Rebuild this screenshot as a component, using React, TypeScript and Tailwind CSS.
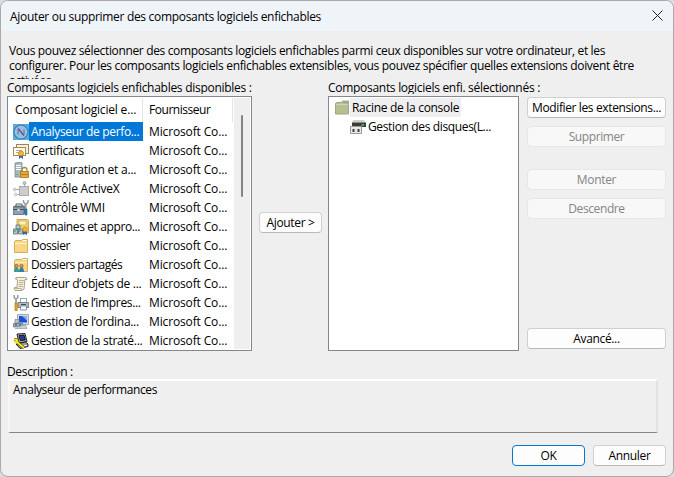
import type { ReactNode } from 'react';
import clsx from 'clsx';

function Icon({ children }: { children: ReactNode }) {
  return (
    <svg viewBox="0 0 16 16" className="h-4 w-4 shrink-0">
      {children}
    </svg>
  );
}

const PerfIcon = () => (
  <Icon>
    <rect width="16" height="16" fill="#5ba9dc" />
    <circle cx="8" cy="8" r="7.2" fill="#4f9dd0" stroke="#3a7cae" strokeWidth=".8" />
    <circle cx="8" cy="8" r="5.6" fill="#8fbfe2" stroke="#a9d0ea" strokeWidth=".8" />
    <path d="M5 10.500V5.500M11 10.500V5.500" fill="none" stroke="#4676ae" strokeWidth="1" />
    <path d="M5 4.500l6 7" stroke="#8b3a72" strokeWidth="1.200" />
  </Icon>
);
const CertIcon = () => (
  <Icon>
    <rect x="3.500" y="1.500" width="12" height="9" fill="#f7f1dc" stroke="#9c8360" />
    <rect x=".5" y="4.500" width="12" height="8" fill="#fffdf2" stroke="#a38a60" />
    <path d="M3 7.500h6M3 9.500h3" stroke="#b5aa92" />
    <path d="M6 11v5l2-1.500 2 1.500v-5z" fill="#2467c2" />
    <circle cx="8" cy="10.500" r="2.500" fill="#f5b52b" stroke="#c07b10" strokeWidth=".7" />
  </Icon>
);
const ServerLockIcon = () => (
  <Icon>
    <path d="M2 1l6-1 1 1v14H2z" fill="#a9b8be" stroke="#7b888e" strokeWidth=".8" />
    <path d="M3 3.500h5M3 5.500h5M3 7.500h5" stroke="#fff" />
    <path d="M3 12.500h2" stroke="#5fb45a" />
    <path d="M9 10V8q0-2.500 2.500-2.500T14 8v2" fill="none" stroke="#9b8b5c" strokeWidth="1.300" />
    <rect x="7.500" y="9.500" width="8" height="6" fill="#e4aa32" stroke="#a67924" strokeWidth=".8" />
    <path d="M8 12.500h7" stroke="#b47f1d" />
  </Icon>
);
const ActiveXIcon = () => (
  <Icon>
    <path d="M11.500 2v4M0 8.500h6M3 13.500h4" stroke="#a5a5a5" />
    <rect x="6.500" y="5.500" width="9" height="9" fill="#cdcdcd" stroke="#ababab" />
    <circle cx="11.500" cy="2" r="1.600" fill="#c4c4c4" stroke="#999" strokeWidth=".6" />
    <circle cx="1.700" cy="8.500" r="1.400" fill="#ddd" stroke="#aaa" strokeWidth=".6" />
    <circle cx="2.700" cy="13.500" r="1.500" fill="#e2e2e2" stroke="#b5b5b5" strokeWidth=".6" />
  </Icon>
);
const ToolboxIcon = () => (
  <Icon>
    <path d="M3 6V4h6v2" fill="none" stroke="#555e66" />
    <path d="M0 7l2-1.500h11V14H0z" fill="#6a7a88" />
    <path d="M0 7h11v7.500H0z" fill="#8fa0ae" stroke="#586672" strokeWidth=".8" />
    <path d="M0 9.500h11" stroke="#45525e" />
    <path d="M4.500 9h2v2h-2z" fill="#e5e9ec" />
    <path d="M10.500 0v2l1.500 2h1.500L15 2V0" fill="none" stroke="#979797" strokeWidth="1.400" />
    <path d="M12.800 4v5" stroke="#a5a5a5" strokeWidth="1.800" />
    <path d="M12 9h2v6h-2z" fill="#3182c9" stroke="#205b91" strokeWidth=".6" />
  </Icon>
);
const DomainIcon = () => (
  <Icon>
    <path d="M4 .5h10.500l1 1V14H4z" fill="#ecd173" stroke="#bb9a42" strokeWidth=".8" />
    <rect x="6" y="2" width="7" height="4" fill="#fff3bd" stroke="#c9a952" strokeWidth=".6" />
    <path d="M3 6h4v4H3zM.5 10h4v5h-4zM5.500 10h4v5h-4z" fill="#b4c8cd" stroke="#5b747c" strokeWidth=".8" />
    <path d="M1 12h2M6 12h2" stroke="#3c9b4b" />
    <path d="M10 11v5l2-1 2 1v-5z" fill="#2467c2" />
    <circle cx="12" cy="10.500" r="2.400" fill="#f5b52b" stroke="#c07b10" strokeWidth=".6" />
  </Icon>
);
const FolderShape = () => (
  <>
    <path d="M1.500 3.500l1-1h6l1-1h5v13h-13z" fill="#f7d785" stroke="#cfa854" strokeWidth=".9" />
    <path d="M10 2.500h3.500" stroke="#fff" />
    <path d="M2 5.500h12" stroke="#fff0bd" strokeWidth="1.200" />
  </>
);
const FolderIcon = () => (
  <Icon>
    <FolderShape />
  </Icon>
);
const SharedIcon = () => (
  <Icon>
    <FolderShape />
    <path d="M1 15q0-4.500 2.500-4.500T6 15z" fill="#36a08b" />
    <path d="M6 15q0-4.500 2.500-4.500T11 15z" fill="#2f7fb5" />
    <circle cx="3.500" cy="9" r="1.600" fill="#e3a06b" stroke="#6d4425" strokeWidth=".7" />
    <circle cx="8.500" cy="9" r="1.600" fill="#e3a06b" stroke="#6d4425" strokeWidth=".7" />
  </Icon>
);
const ScrollIcon = () => (
  <Icon>
    <path d="M3 1.500h9.500q1.500 0 1.500 2h-2l-1 9.500q-1 1.500-3 1.500H2q-1.500-1-.5-3H4L4.500 4Q1.500 3.500 3 1.500z" fill="#f5efd9" stroke="#a0977f" strokeWidth=".9" />
    <path d="M6 4.500h5M6 6.500h4.500M5.500 8.500H10M5.500 10.500H10" stroke="#aaa18b" strokeWidth=".8" />
    <path d="M1.500 12.500h7v2" fill="none" stroke="#b5ac94" strokeWidth=".9" />
  </Icon>
);
const PrinterIcon = () => (
  <Icon>
    <rect x="7.500" y="3.500" width="6" height="5" fill="#fff" stroke="#8292a0" strokeWidth=".8" />
    <path d="M5 7.500h10.500v5H5z" fill="#b2bbc2" stroke="#65707a" strokeWidth=".8" />
    <path d="M7.500 11h6v4h-6z" fill="#f5f8fb" stroke="#75828d" strokeWidth=".8" />
    <path d="M8 9.500h5" stroke="#41484e" />
    <path d="M1.200 0v2.500l1.300 1.500h1l1.300-1.500V0" fill="none" stroke="#959595" strokeWidth="1.400" />
    <path d="M3 4v4" stroke="#a5a5a5" strokeWidth="1.800" />
    <rect x="2" y="8" width="2.200" height="7.500" fill="#f2a51c" stroke="#a96a0b" strokeWidth=".6" />
  </Icon>
);
const ComputerIcon = () => (
  <Icon>
    <path d="M4.500.5h11v10h-11z" fill="#d5dde4" stroke="#95a0aa" strokeWidth=".9" />
    <path d="M6 2h8v6.500H6z" fill="#1f4fd0" />
    <path d="M9 2h5v4.500z" fill="#81b2f7" />
    <path d="M2 5.500h4V9H2z" fill="#b7c2cb" stroke="#7b8995" strokeWidth=".7" />
    <path d="M.5 9.500h9v3.500h-9z" fill="#9fb0be" stroke="#637381" strokeWidth=".8" />
    <path d="M2 11h2M6 11h2" stroke="#37424b" />
    <path d="M2 14.500h12l-1-3h-3" fill="#c9d1d8" stroke="#9ba5ae" strokeWidth=".8" />
  </Icon>
);
const PolicyIcon = () => (
  <Icon>
    <path d="M4 1l8-.5 2 8-8 1.500z" fill="#b9b9b9" stroke="#111" strokeWidth=".9" />
    <path d="M6 2.500l5-.4 1.300 4.800-5 .8z" fill="#2b3a92" stroke="#000" strokeWidth=".8" />
    <path d="M3 11l9.500-2 2.500 2v2.500L7 15.500z" fill="#9a9a9a" stroke="#111" strokeWidth=".9" />
    <path d="M11 12.500h3" stroke="#eee" />
    <path d="M1 6.500l3 .5.500 2.500 6.500 5.500" fill="none" stroke="#333" strokeWidth="2.800" />
    <path d="M1 6.500l3 .5.500 2.500 6.500 5.500M1.500 9.500h3" fill="none" stroke="#ffee12" strokeWidth="1.900" />
  </Icon>
);
const RootIcon = () => (
  <Icon>
    <path d="M1.500 3.500l1-1h5l1-1.500h6v13h-13z" fill="#b8be94" stroke="#9a9f7c" strokeWidth=".9" />
    <path d="M9 2.500h4.500" stroke="#6fa9c6" strokeWidth="1.200" />
    <path d="M2 4.500h12" stroke="#d0d5b4" />
  </Icon>
);
const DiskIcon = () => (
  <Icon>
    <path d="M3 1h11l1.500 3H2z" fill="#d0d0d0" />
    <path d="M2 3.500h14V8H2z" fill="#3c3c3c" />
    <path d="M2 3.500h14" stroke="#8d8d8d" />
    <path d="M11.500 6h2.500" stroke="#37d64b" strokeWidth="1.400" />
    <path d="M.5 7.500h11v7H.5z" fill="#e8e8e8" stroke="#9d9d9d" />
    <path d="M2.500 10h2v3h-2zM7.500 10h2v3h-2z" fill="#414141" />
  </Icon>
);

const snapins = [
  { icon: <PerfIcon />, name: 'Analyseur de perfo...', track: 'tracking-[-0.34px]' },
  { icon: <CertIcon />, name: 'Certificats', track: 'tracking-[-0.28px]' },
  { icon: <ServerLockIcon />, name: 'Configuration et a...', track: 'tracking-[-0.22px]' },
  { icon: <ActiveXIcon />, name: 'Contrôle ActiveX', track: 'tracking-[-0.2px]' },
  { icon: <ToolboxIcon />, name: 'Contrôle WMI', track: 'tracking-[-0.24px]' },
  { icon: <DomainIcon />, name: 'Domaines et appro...', track: 'tracking-[-0.38px]' },
  { icon: <FolderIcon />, name: 'Dossier', track: 'tracking-[-0.44px]' },
  { icon: <SharedIcon />, name: 'Dossiers partagés', track: 'tracking-[-0.5px]' },
  { icon: <ScrollIcon />, name: 'Éditeur d’objets de ...', track: 'tracking-[-0.28px]' },
  { icon: <PrinterIcon />, name: 'Gestion de l’impres...', track: 'tracking-[-0.32px]' },
  { icon: <ComputerIcon />, name: 'Gestion de l’ordina...', track: 'tracking-[-0.3px]' },
  { icon: <PolicyIcon />, name: 'Gestion de la straté...', track: 'tracking-[-0.3px]' },
];

function Button({ children, className, disabled, primary }: { children: ReactNode; className: string; disabled?: boolean; primary?: boolean }) {
  return (
    <button
      disabled={disabled}
      className={clsx(
        'flex h-[21px] shrink-0 items-center justify-center whitespace-nowrap rounded-[4px] border',
        disabled && 'border-[#e7e7e7] bg-[#f8f8f8] text-[#858585]',
        primary && 'border-[#0078d4] bg-[#fdfdfd]',
        !disabled && !primary && 'border-[#d0d0d0] border-b-[#b9b9b9] bg-[#fdfdfd]',
        className,
      )}
    >
      {children}
    </button>
  );
}

export default function App() {
  return (
    <div className="h-[477px] w-[674px] bg-[#dcdcdc] font-['Open_Sans','Noto_Sans',sans-serif] text-[12px] leading-[15px] tracking-[-0.34px] text-black">
      <div className="flex h-full w-full flex-col overflow-hidden rounded-[8px] border border-[#aaaaaa] bg-[#efefef]">
        <header className="flex h-[30px] shrink-0 items-center justify-between bg-[#eff4f8] pl-[9px] pr-[10px]">
          <h1 className="whitespace-nowrap tracking-[-0.313px]">Ajouter ou supprimer des composants logiciels enfichables</h1>
          <svg viewBox="0 0 11 11" className="mb-[2px] h-[11px] w-[11px]">
            <path d="M.5.5l10 10M10.500.5l-10 10" stroke="#222" strokeWidth="1" />
          </svg>
        </header>

        <div className="mt-3 h-9 shrink-0 overflow-hidden whitespace-nowrap pl-2">
          <p className="tracking-[-0.352px]">Vous pouvez sélectionner des composants logiciels enfichables parmi ceux disponibles sur votre ordinateur, et les</p>
          <p className="tracking-[-0.332px]">configurer. Pour les composants logiciels enfichables extensibles, vous pouvez spécifier quelles extensions doivent être</p>
          <p>activées.</p>
        </div>

        <main className="flex h-[272px] shrink-0 pl-[6px]">
          <section className="w-[245px]">
            <h2 className="mt-px h-[14px] overflow-hidden whitespace-nowrap leading-[16px] tracking-[-0.28px]">Composants logiciels enfichables disponibles :</h2>
            <div className="mt-[2px] flex h-[255px] border border-[#828790] bg-white">
              <div className="w-[226px]">
                <div className="flex h-[25px] pt-px">
                  <div className="w-[135px] border-r border-[#e5e5e5] pl-[7px] leading-[24px] tracking-[-0.18px]">Composant logiciel e...</div>
                  <div className="w-[90px] border-r border-[#e5e5e5] pl-[6px] leading-[24px] tracking-[-0.46px]">Fournisseur</div>
                </div>
                {snapins.map((s, i) => (
                  <div key={s.name} className="flex h-[19px] items-center whitespace-nowrap pl-[5px] leading-[19px]">
                    {s.icon}
                    <div className={clsx('h-[19px] w-[114px] pl-[2px]', s.track, i === 0 && 'bg-[#0078d7] text-white')}>{s.name}</div>
                    <div className="pl-[6px] tracking-[-0.14px]">Microsoft Co...</div>
                  </div>
                ))}
              </div>
              <div className="mt-px mr-px flex h-[251px] flex-1 justify-center bg-[#efefef]">
                <div className="mt-[17px] h-[82px] w-[2px] rounded-full bg-[#858585]" />
              </div>
            </div>
          </section>

          <div className="w-[76px] pl-[7px] pt-[133px]">
            <Button className="w-[63px]">Ajouter &gt;</Button>
          </div>

          <section className="w-[191px]">
            <h2 className="mt-px h-[14px] w-[230px] overflow-hidden whitespace-nowrap leading-[16px] tracking-[-0.289px]">Composants logiciels enfi. sélectionnés :</h2>
            <div className="mt-[2px] h-[255px] border border-[#828790] bg-white pt-px leading-[19px]">
              <div className="flex h-[19px] items-center pl-[5px]">
                <RootIcon />
                <span className="w-[111px] whitespace-nowrap bg-[#efefef] pl-[2px] tracking-[-0.3px]">Racine de la console</span>
              </div>
              <div className="flex h-[19px] items-center pl-[21px]">
                <DiskIcon />
                <span className="whitespace-nowrap pl-[2px] tracking-[-0.359px]">Gestion des disques(L...</span>
              </div>
            </div>
          </section>

          <aside className="flex w-[147px] flex-col pl-2 pt-[18px]">
            <Button className="w-[139px] tracking-[-0.374px]">Modifier les extensions...</Button>
            <Button disabled className="mt-2 w-[139px] tracking-[-0.4px]">Supprimer</Button>
            <Button disabled className="mt-[22px] w-[139px]">Monter</Button>
            <Button disabled className="mt-2 w-[139px] tracking-[-0.4px]">Descendre</Button>
            <Button className="mt-[109px] w-[139px]">Avancé...</Button>
          </aside>
        </main>

        <section className="mt-3 shrink-0 px-[6px]">
          <h2 className="h-4 leading-[17px]">Description :</h2>
          <div className="ml-px h-[54px] w-[650px] border-2 border-b border-t-white border-l-[#f7f7f7] border-r-[#e2e2e2] border-b-[#858585] pl-[3px] pt-px tracking-[-0.407px]">
            Analyseur de performances
          </div>
        </section>

        <footer className="mt-3 flex justify-end gap-2 pr-[7px]">
          <Button primary className="w-[73px]">OK</Button>
          <Button className="w-[73px]">Annuler</Button>
        </footer>
      </div>
    </div>
  );
}
